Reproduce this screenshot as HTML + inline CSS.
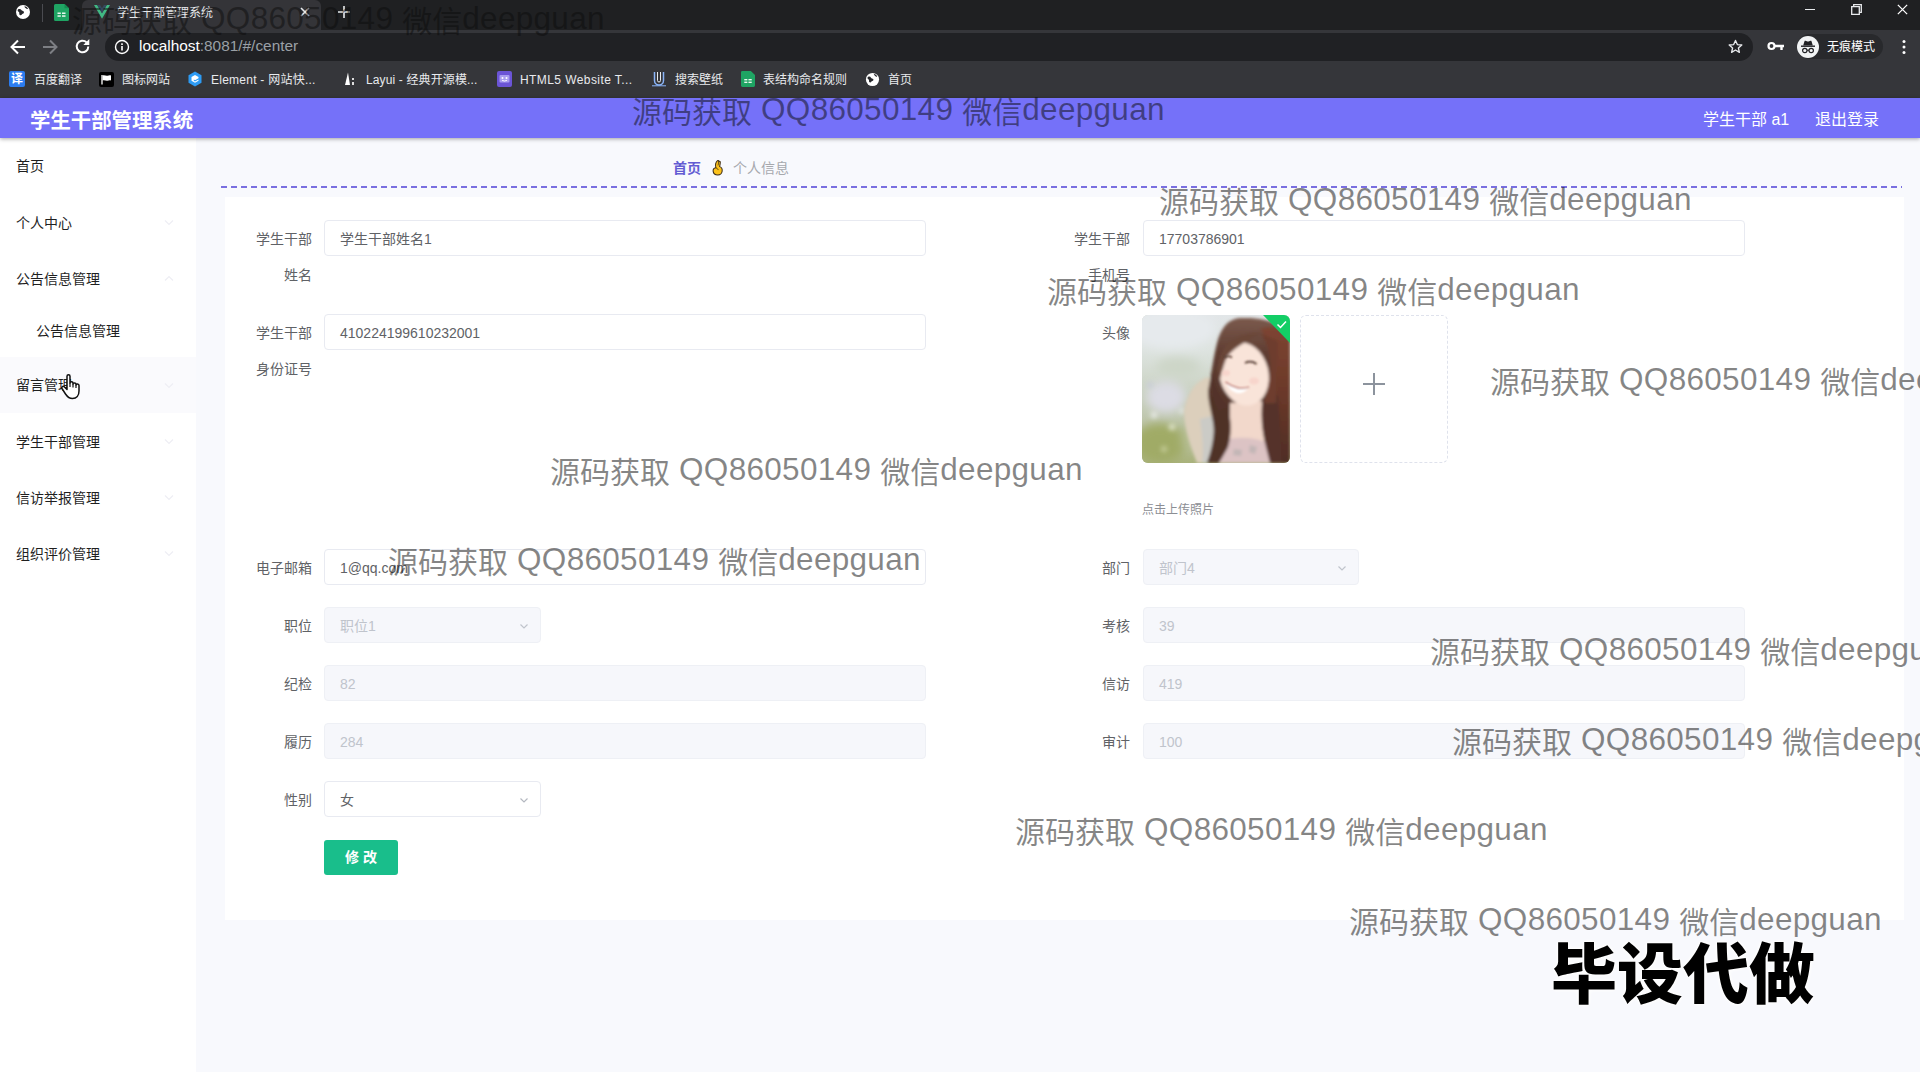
<!DOCTYPE html>
<html lang="zh-CN">
<head>
<meta charset="utf-8">
<title>学生干部管理系统</title>
<style>
*{box-sizing:border-box;margin:0;padding:0}
html,body{width:1920px;height:1072px;overflow:hidden;background:#f8f9fd;font-family:"Liberation Sans","Noto Sans CJK SC",sans-serif;}
.abs{position:absolute}
#chrome{position:absolute;left:0;top:0;width:1920px;height:98px;background:#35363a;color:#e8eaed}
#tabbar{position:absolute;left:0;top:0;width:1920px;height:30px;background:#1f2022}
#tab{position:absolute;left:82px;top:0;width:239px;height:30px;background:#343438;border-radius:6px 6px 0 0}
#tabtitle{position:absolute;left:117px;top:5px;font-size:12px;color:#e8eaed;line-height:16px;white-space:nowrap}
#omni{position:absolute;left:105px;top:33px;width:1648px;height:28px;border-radius:15px;background:#202124}
#url{position:absolute;left:139px;top:37px;font-size:15.4px;line-height:18px;color:#fff;white-space:nowrap}
#url span{color:#9aa0a6}
.bm{position:absolute;top:72px;font-size:12px;line-height:16px;color:#e8eaed;white-space:nowrap}
#hdr{position:absolute;left:0;top:98px;width:1920px;height:40px;background:#7571f9;box-shadow:0 1px 4px rgba(0,0,0,.35)}
#hdr .title{position:absolute;left:30px;top:9.5px;font-size:20.4px;line-height:26px;font-weight:bold;color:#fff;white-space:nowrap}
#hdr .r{position:absolute;top:11.5px;font-size:16px;line-height:20px;color:#fff;white-space:nowrap}
#side{position:absolute;left:0;top:138px;width:196px;height:934px;background:#fff}
.mi{position:absolute;left:16px;font-size:14px;line-height:18px;color:#1f1f1f;white-space:nowrap}
#hover{position:absolute;left:0;top:357px;width:196px;height:56px;background:#fafafd}
.crumb{position:absolute;top:159px;font-size:14px;line-height:18px;white-space:nowrap}
#dash{position:absolute;left:221px;top:186px;width:1681px;height:2px;background:repeating-linear-gradient(90deg,#7a6fe0 0 6px,transparent 6px 10px)}
#card{position:absolute;left:225px;top:197px;width:1679px;height:723px;background:#fff}
.lb{position:absolute;font-size:14px;line-height:18px;color:#606266;text-align:right;width:90px;white-space:nowrap}
.in{position:absolute;height:36px;border:1px solid #e8eaf1;border-radius:4px;background:#fff;font-size:14px;line-height:36px;padding-left:15px;color:#606266;white-space:nowrap}
.in.dis{background:#f6f7fb;border-color:#eef0f5;color:#c0c4cc}
.wm span{font-size:31.5px;letter-spacing:.3px;position:relative;top:-3px}
.wm{position:absolute;font-size:30px;line-height:40px;color:rgba(12,12,12,.5);white-space:nowrap;font-family:"Liberation Sans","Noto Sans CJK SC",sans-serif}

.chev{position:absolute;right:10px;top:12px;width:12px;height:12px}
#btn{position:absolute;left:324px;top:840px;width:74px;height:35px;border-radius:3px;background:#19be8b;color:#fff;font-weight:bold;font-size:14px;line-height:35px;text-align:center}
#photo{position:absolute;left:1142px;top:315px;width:148px;height:148px;border-radius:6px;background:#c9d2c0;overflow:hidden}
#upbox{position:absolute;left:1300px;top:315px;width:148px;height:148px;border-radius:6px;border:1px dashed #dfe2ec;background:#fff}
#upbox .ph{position:absolute;left:62px;top:67px;width:22px;height:1.6px;background:#8c939d}
#upbox .pv{position:absolute;left:72.2px;top:57px;width:1.6px;height:22px;background:#8c939d}
#tip{position:absolute;left:1142px;top:502px;font-size:12px;line-height:16px;color:#8c8e94;white-space:nowrap}

#big{position:absolute;left:1551px;top:925px;font-family:"Noto Sans CJK SC","Liberation Sans",sans-serif;font-weight:900;font-size:66px;line-height:88px;color:#000;white-space:nowrap;letter-spacing:0;-webkit-text-stroke:0;text-shadow:0 0 3px #fff,0 0 3px #fff,0 0 3px #fff,0 0 4px #fff,0 0 5px #fff}
</style>
</head>
<body>
<div id="chrome">
  <div id="tabbar"></div>
  <div id="tab"></div>
  <div id="tabtitle">学生干部管理系统</div>
  <div id="omni"></div>
  <div id="url">localhost<span>:8081/#/center</span></div>

  <!-- tab strip icons -->
  <svg class="abs" style="left:15px;top:4px" width="16" height="16" viewBox="0 0 16 16"><circle cx="8" cy="8" r="7" fill="#fff"/><path d="M3.2 5.2c1.4-.6 2.6-.2 3.2.8.5.9 1.6.7 2.3 1.4.7.8.1 2-.9 2.3-1 .3-1.2 1.5-2.2 1.6-1.1.1-1.5-1.2-1.3-2.2.2-.9-.7-1.3-1.3-1.9-.5-.6-.4-1.600.2-2zM9.500 2.200c1.5.2 2.900 1.200 3.500 2.500-.7.5-1.600.2-2.100-.4-.5-.7-1.500-.9-1.400-2.100z" fill="#26272b"/></svg>
  <div class="abs" style="left:42px;top:4px;width:1px;height:18px;background:#4a4b50"></div>
  <svg class="abs" style="left:54px;top:4px" width="15" height="17" viewBox="0 0 15 17"><path d="M1.500 0h9l4.500 4.200v11.300a1.500 1.500 0 0 1-1.500 1.500h-12a1.500 1.500 0 0 1-1.500-1.500v-14a1.500 1.500 0 0 1 1.500-1.500z" fill="#1fa463"/><path d="M10.500 0l4.500 4.200h-4.500z" fill="#168a50"/><rect x="3.500" y="8.500" width="3.300" height="1.500" fill="#e9f7ef"/><rect x="8" y="8.500" width="3.500" height="1.500" fill="#e9f7ef"/><rect x="3.500" y="11.300" width="3.300" height="1.500" fill="#e9f7ef"/><rect x="8" y="11.300" width="3.500" height="1.500" fill="#e9f7ef"/></svg>
  <svg class="abs" style="left:94px;top:5px" width="16" height="14" viewBox="0 0 16 14"><path d="M0 0h3.200l4.800 8.300 4.800-8.300h3.200l-8 13.800z" fill="#41b883"/><path d="M3.200 0h2.900l1.900 3.300 1.900-3.300h2.900l-4.800 8.300z" fill="#35495e"/></svg>
  <svg class="abs" style="left:299px;top:6px" width="12" height="12" viewBox="0 0 12 12"><path d="M2 2l8 8M10 2l-8 8" stroke="#e8eaed" stroke-width="1.600" fill="none"/></svg>
  <svg class="abs" style="left:337px;top:5px" width="14" height="14" viewBox="0 0 14 14"><path d="M7 1v12M1 7h12" stroke="#e8eaed" stroke-width="1.600" fill="none"/></svg>
  <!-- window controls -->
  <div class="abs" style="left:1805px;top:9px;width:10px;height:1px;background:#e8eaed"></div>
  <svg class="abs" style="left:1851px;top:4px" width="11" height="11" viewBox="0 0 11 11"><path d="M.7 2.700h7.600v7.600h-7.600z" fill="none" stroke="#e8eaed" stroke-width="1.300"/><path d="M2.700 2.700v-2h7.600v7.600h-2" fill="none" stroke="#e8eaed" stroke-width="1.300"/></svg>
  <svg class="abs" style="left:1897px;top:4px" width="11" height="11" viewBox="0 0 13 13"><path d="M1 1l11 11M12 1l-11 11" stroke="#fff" stroke-width="1.500" fill="none"/></svg>
  <!-- toolbar icons -->
  <svg class="abs" style="left:10px;top:39px" width="16" height="16" viewBox="0 0 16 16"><path d="M15 8h-13M8 1.500l-6.500 6.500 6.500 6.500" stroke="#fff" stroke-width="2" fill="none"/></svg>
  <svg class="abs" style="left:42px;top:39px" width="16" height="16" viewBox="0 0 16 16"><path d="M1 8h13M8 1.500l6.500 6.500-6.500 6.500" stroke="#7d7f84" stroke-width="2" fill="none"/></svg>
  <svg class="abs" style="left:74px;top:38px" width="17" height="17" viewBox="0 0 17 17"><path d="M14.300 8.500a5.800 5.800 0 1 1-1.700-4.100" stroke="#fff" stroke-width="2" fill="none"/><path d="M15.300 1v6h-6z" fill="#fff"/></svg>
  <svg class="abs" style="left:114px;top:39px" width="16" height="16" viewBox="0 0 16 16"><circle cx="8" cy="8" r="6.500" stroke="#fff" stroke-width="1.400" fill="none"/><rect x="7.200" y="7" width="1.600" height="4.500" fill="#fff"/><rect x="7.200" y="4.300" width="1.600" height="1.700" fill="#fff"/></svg>
  <svg class="abs" style="left:1727px;top:38px" width="17" height="17" viewBox="0 0 24 24"><path d="M12 3.500l2.600 5.800 6.300.6-4.800 4.200 1.400 6.200-5.500-3.300-5.500 3.300 1.400-6.200-4.800-4.200 6.300-.6z" stroke="#e8eaed" stroke-width="1.900" fill="none" stroke-linejoin="round"/></svg>
  <svg class="abs" style="left:1767px;top:40px" width="18" height="14" viewBox="0 0 18 14"><circle cx="4.500" cy="6" r="3" stroke="#fff" stroke-width="2.200" fill="none"/><path d="M7.500 6h9.500M14.500 6v4" stroke="#fff" stroke-width="2.400" fill="none"/></svg>
  <div class="abs" style="left:1797px;top:34px;width:86px;height:25px;border-radius:12.500px;background:#28292c"></div>
  <svg class="abs" style="left:1797px;top:36px" width="22" height="22" viewBox="0 0 22 22"><circle cx="11" cy="11" r="11" fill="#f1f3f4"/><path d="M6.200 9.500l1.300-4.300c.2-.5.600-.6 1-.4l1.300.5c.8.300 1.600.300 2.400 0l1.300-.5c.4-.2.800-.1 1 .4l1.300 4.300z" fill="#202124"/><rect x="4" y="9.500" width="14" height="1.400" fill="#202124"/><circle cx="7.800" cy="14.500" r="2.200" stroke="#202124" stroke-width="1.200" fill="none"/><circle cx="14.200" cy="14.500" r="2.200" stroke="#202124" stroke-width="1.200" fill="none"/><path d="M10 14.200h2" stroke="#202124" stroke-width="1.100"/></svg>
  <div class="abs" style="left:1827px;top:39px;font-size:12px;line-height:16px;color:#fff;white-space:nowrap">无痕模式</div>
  <svg class="abs" style="left:1902px;top:39px" width="4" height="16" viewBox="0 0 4 16"><circle cx="2" cy="2.500" r="1.500" fill="#fff"/><circle cx="2" cy="8" r="1.500" fill="#fff"/><circle cx="2" cy="13.500" r="1.500" fill="#fff"/></svg>
  <!-- bookmark favicons -->
  <div class="abs" style="left:9px;top:71px;width:16px;height:16px;background:#2b7cf0;border-radius:2px;color:#fff;font-size:12px;line-height:16px;text-align:center;font-weight:bold">译</div>
  <svg class="abs" style="left:99px;top:72px" width="15" height="15" viewBox="0 0 15 15"><rect width="15" height="15" rx="2" fill="#000"/><path d="M3 3v9.500" stroke="#fff" stroke-width="1.300"/><path d="M3.600 3.500c1.800-1 3.200.6 4.800.2 1.300-.3 2.300-.7 3.600-.2v5c-1.300-.5-2.300-.1-3.600.2-1.600.4-3-1.200-4.800-.2z" fill="#fff"/></svg>
  <svg class="abs" style="left:188px;top:71px" width="14" height="16" viewBox="0 0 14 16"><path d="M7 .5l6.500 3.700v7.600l-6.500 3.700-6.500-3.700v-7.600z" fill="#2d9bf4"/><path d="M7 4l3.500 2v1.200l-3.500 2-1.200-.7v1.200l1.200.7 3.500-2v1.300l-3.500 2-3.500-2v-3.700z" fill="#fff"/></svg>
  <svg class="abs" style="left:345px;top:72px" width="11" height="14" viewBox="0 0 11 14"><path d="M3 .5l2 12.500h-5z" fill="#fff"/><rect x="7" y="6" width="2" height="2" fill="#ddd"/><rect x="7" y="10" width="2" height="3" fill="#ddd"/></svg>
  <svg class="abs" style="left:497px;top:71px" width="15" height="16" viewBox="0 0 15 16"><rect width="15" height="16" rx="2" fill="#6b54d6"/><rect x="2.500" y="4" width="10" height="7.500" rx="1" fill="#a99df0"/><circle cx="5.500" cy="7" r="1" fill="#fff"/><circle cx="9.500" cy="7" r="1" fill="#fff"/><path d="M5 9.300q2.500 1.500 5 0" stroke="#fff" fill="none" stroke-width=".9"/></svg>
  <svg class="abs" style="left:651px;top:71px" width="16" height="16" viewBox="0 0 16 16"><path d="M3.500 1v8.500a4.500 4.500 0 0 0 9 0v-8.500" stroke="#8ab4f8" stroke-width="1.500" fill="none"/><path d="M6.500 1v8.500a1.500 1.500 0 0 0 3 0v-8.500" stroke="#e8eaed" stroke-width="1" fill="none"/><path d="M1 14.800h14" stroke="#8ab4f8" stroke-width="1"/></svg>
  <svg class="abs" style="left:741px;top:71px" width="14" height="16" viewBox="0 0 15 17"><path d="M1.500 0h9l4.500 4.200v11.300a1.500 1.500 0 0 1-1.500 1.500h-12a1.500 1.500 0 0 1-1.500-1.500v-14a1.500 1.500 0 0 1 1.500-1.500z" fill="#1fa463"/><rect x="3.500" y="8.500" width="3.300" height="1.500" fill="#e9f7ef"/><rect x="8" y="8.500" width="3.500" height="1.500" fill="#e9f7ef"/><rect x="3.500" y="11.300" width="3.300" height="1.500" fill="#e9f7ef"/><rect x="8" y="11.300" width="3.500" height="1.500" fill="#e9f7ef"/></svg>
  <svg class="abs" style="left:865px;top:72px" width="15" height="15" viewBox="0 0 16 16"><circle cx="8" cy="8" r="7" fill="#fff"/><path d="M3.200 5.200c1.400-.6 2.600-.2 3.200.8.5.9 1.600.7 2.300 1.400.7.8.1 2-.9 2.300-1 .3-1.200 1.500-2.200 1.600-1.100.1-1.500-1.200-1.300-2.200.2-.9-.7-1.300-1.300-1.900-.5-.6-.4-1.600.2-2zM9.500 2.200c1.500.2 2.900 1.200 3.500 2.500-.7.5-1.600.2-2.100-.4-.5-.7-1.500-.9-1.400-2.100z" fill="#26272b"/></svg>
  <div class="bm" style="left:34px">百度翻译</div>
  <div class="bm" style="left:122px">图标网站</div>
  <div class="bm" style="left:211px;letter-spacing:.25px">Element - 网站快...</div>
  <div class="bm" style="left:366px;letter-spacing:.13px">Layui - 经典开源模...</div>
  <div class="bm" style="left:520px;letter-spacing:.42px">HTML5 Website T...</div>
  <div class="bm" style="left:675px">搜索壁纸</div>
  <div class="bm" style="left:763px">表结构命名规则</div>
  <div class="bm" style="left:888px">首页</div>
</div>
<div id="side">
</div>
<div id="hover"></div>
<svg class="abs" style="left:164px;top:219px" width="10" height="7" viewBox="0 0 10 7"><path d="M1 1.500 L5 5.500 L9 1.500" fill="none" stroke="#eeeef4" stroke-width="1.200"/></svg>
<svg class="abs" style="left:164px;top:275px" width="10" height="7" viewBox="0 0 10 7"><path d="M1 5.500 L5 1.500 L9 5.500" fill="none" stroke="#eeeef4" stroke-width="1.200"/></svg>
<svg class="abs" style="left:164px;top:382px" width="10" height="7" viewBox="0 0 10 7"><path d="M1 1.500 L5 5.500 L9 1.500" fill="none" stroke="#eeeef4" stroke-width="1.200"/></svg>
<svg class="abs" style="left:164px;top:438px" width="10" height="7" viewBox="0 0 10 7"><path d="M1 1.500 L5 5.500 L9 1.500" fill="none" stroke="#eeeef4" stroke-width="1.200"/></svg>
<svg class="abs" style="left:164px;top:494px" width="10" height="7" viewBox="0 0 10 7"><path d="M1 1.500 L5 5.500 L9 1.500" fill="none" stroke="#eeeef4" stroke-width="1.200"/></svg>
<svg class="abs" style="left:164px;top:550px" width="10" height="7" viewBox="0 0 10 7"><path d="M1 1.500 L5 5.500 L9 1.500" fill="none" stroke="#eeeef4" stroke-width="1.200"/></svg>
<div class="mi" style="top:157px">首页</div>
<div class="mi" style="top:214px">个人中心</div>
<div class="mi" style="top:270px">公告信息管理</div>
<div class="mi" style="top:322px;left:36px">公告信息管理</div>
<div class="mi" style="top:376px">留言管理</div>
<div class="mi" style="top:433px">学生干部管理</div>
<div class="mi" style="top:489px">信访举报管理</div>
<div class="mi" style="top:545px">组织评价管理</div>

<svg class="abs" style="left:60px;top:373px" width="21" height="27" viewBox="0 0 21 27"><path d="M7 13.500 V3.200 C7 1.200 10 1.200 10 3.200 V10 C10 8.300 13 8.300 13 10.200 V11 C13 9.500 16 9.500 16 11.200 V12 C16 10.700 19 10.700 19 12.500 V18 C19 22.500 16.500 25.500 12.500 25.500 C9 25.500 7.500 24 5.500 21 L2 15.500 C1 13.800 3.200 12.500 4.500 14 L7 16.500 Z" fill="#fff" stroke="#111" stroke-width="1.500" stroke-linejoin="round"/><path d="M10 10 V14 M13 11 V14.500 M16 12 V15" stroke="#111" stroke-width="1.200" fill="none"/></svg>
<div class="crumb" style="left:673px;color:#635cd3;font-weight:bold">首页</div>
<div class="crumb" style="left:733px;color:#a6a8ad">个人信息</div>
<svg class="abs" style="left:711px;top:159px" width="13" height="17.500" viewBox="0 0 14 18"><path d="M5.200 9 C4.500 6 5.500 2.500 7 1.300 C8 .8 8.600 1.600 8.200 2.600 C8.800 1.600 10 1.600 10 2.900 C10 5 9.600 6.500 9.300 7.800 C11.500 8.500 12.300 10.500 12 12.800 C11.600 15.500 9.800 16.800 7.300 16.800 C4.600 16.800 2.600 15.200 2.300 12.600 C2.100 10.800 3.200 9.300 5.200 9 Z" fill="#fcc21b" stroke="#3b2a14" stroke-width="1.100" stroke-linejoin="round"/><path d="M5.200 9.200 C6.500 9.500 7.500 10.200 7.700 11.500" stroke="#3b2a14" stroke-width=".9" fill="none"/><path d="M7.600 6.500 L8.300 2.800" stroke="#3b2a14" stroke-width=".8" fill="none"/></svg>
<div id="dash"></div>
<div id="card"></div>

<!-- left column -->
<div class="lb" style="left:222px;top:230px">学生干部</div>
<div class="lb" style="left:222px;top:266px">姓名</div>
<div class="in" style="left:324px;top:220px;width:602px">学生干部姓名1</div>
<div class="lb" style="left:222px;top:324px">学生干部</div>
<div class="lb" style="left:222px;top:360px">身份证号</div>
<div class="in" style="left:324px;top:314px;width:602px">410224199610232001</div>
<div class="lb" style="left:222px;top:559px">电子邮箱</div>
<div class="in" style="left:324px;top:549px;width:602px">1@qq.com</div>
<div class="lb" style="left:222px;top:617px">职位</div>
<div class="in dis" style="left:324px;top:607px;width:217px">职位1<svg class="chev" viewBox="0 0 12 12"><path d="M2.5 4.5 L6 8 L9.5 4.5" fill="none" stroke="#c0c4cc" stroke-width="1.2"/></svg></div>
<div class="lb" style="left:222px;top:675px">纪检</div>
<div class="in dis" style="left:324px;top:665px;width:602px">82</div>
<div class="lb" style="left:222px;top:733px">履历</div>
<div class="in dis" style="left:324px;top:723px;width:602px">284</div>
<div class="lb" style="left:222px;top:791px">性别</div>
<div class="in" style="left:324px;top:781px;width:217px">女<svg class="chev" viewBox="0 0 12 12"><path d="M2.5 4.5 L6 8 L9.5 4.5" fill="none" stroke="#b4b8c0" stroke-width="1.2"/></svg></div>
<div id="btn">修 改</div>

<!-- right column -->
<div class="lb" style="left:1040px;top:230px">学生干部</div>
<div class="lb" style="left:1040px;top:266px">手机号</div>
<div class="in" style="left:1143px;top:220px;width:602px">17703786901</div>
<div class="lb" style="left:1040px;top:324px">头像</div>
<div id="photo"><svg width="148" height="148" viewBox="0 0 148 148">
<defs>
<filter id="b6" x="-30%" y="-30%" width="160%" height="160%"><feGaussianBlur stdDeviation="5"/></filter>
<filter id="b3" x="-30%" y="-30%" width="160%" height="160%"><feGaussianBlur stdDeviation="1.800"/></filter>
<filter id="b15" x="-30%" y="-30%" width="160%" height="160%"><feGaussianBlur stdDeviation=".8"/></filter>
<filter id="b2" x="-30%" y="-30%" width="160%" height="160%"><feGaussianBlur stdDeviation="2.500"/></filter>
<linearGradient id="bgp" x1="0" y1="0" x2="0" y2="1"><stop offset="0" stop-color="#e2e6e8"/><stop offset=".25" stop-color="#dde3df"/><stop offset=".5" stop-color="#cbd3c4"/><stop offset=".75" stop-color="#bcc4a8"/><stop offset="1" stop-color="#a9b27c"/></linearGradient>
<linearGradient id="hairg" x1="0" y1="0" x2="0" y2="1"><stop offset="0" stop-color="#7b5a4d"/><stop offset=".25" stop-color="#5e3c31"/><stop offset="1" stop-color="#4b2d25"/></linearGradient>
<linearGradient id="hairr" x1="0" y1="0" x2="0" y2="1"><stop offset="0" stop-color="#7d4431"/><stop offset=".5" stop-color="#6a3829"/><stop offset="1" stop-color="#4e2c24"/></linearGradient>
</defs>
<rect width="148" height="148" fill="url(#bgp)"/>
<g filter="url(#b6)">
<ellipse cx="30" cy="14" rx="44" ry="20" fill="#e6eaed"/>
<ellipse cx="24" cy="82" rx="20" ry="16" fill="#dcdce4"/>
<ellipse cx="18" cy="128" rx="26" ry="20" fill="#a0ab66"/>
<ellipse cx="36" cy="52" rx="22" ry="10" fill="#cdd6c8"/>
<ellipse cx="48" cy="122" rx="8" ry="14" fill="#b7bf95"/>
</g>
<g filter="url(#b2)">
<circle cx="12" cy="100" r="3" fill="#eef0ee"/><circle cx="30" cy="112" r="3" fill="#e8ecd8"/><circle cx="22" cy="134" r="2.500" fill="#d5dbb0"/><circle cx="40" cy="96" r="3" fill="#e4e6e6"/><circle cx="8" cy="70" r="3" fill="#c9cdd9"/>
</g>
<g filter="url(#b3)">
<path d="M66 62 C54 66 46 76 42 96 C42 116 50 134 55 148 L80 148 L76 70 Z" fill="#dccfbc"/>
<path d="M58 104 C60 120 62 136 60 148 L76 148 L74 100 Z" fill="#cbcbc6"/>
<path d="M100 3 C88 3 80 10 75 28 C71 44 70 56 66 76 C66 90 72 104 72 118 C72 130 68 140 65 148 L148 148 L148 20 C140 8 122 2 100 3 Z" fill="url(#hairg)"/>
<path d="M118 14 C132 30 138 70 132 110 C130 126 136 140 138 148 L148 148 L148 20 C140 12 128 10 118 14 Z" fill="url(#hairr)"/>
<path d="M88 88 C88 104 88 122 80 148 L128 148 C122 130 119 108 120 86 Z" fill="#f2d8cb"/>
<path d="M80 126 C94 121 112 122 126 128 L130 148 L76 148 Z" fill="#dcc3c4"/>
<path d="M92 134 l8 1 l-1 6 l-8 -1 Z M108 130 l7 2 l-2 7 l-6 -2 Z" fill="#c2b6b6"/>
<path d="M84 92 C90 100 90 120 86 132 C82 140 78 146 77 148 L65 148 C70 134 72 122 72 110 C72 100 68 92 68 80 Z" fill="#4f3028"/>
<path d="M121 84 C118 100 120 116 124 132 L128 148 L140 148 L136 80 Z" fill="#55302a"/>
<ellipse cx="102" cy="59" rx="24.500" ry="32" transform="rotate(-14 102 59)" fill="#f9e4d9"/>
<path d="M76 56 C76 36 88 16 120 18 C110 24 94 30 85 42 C82 48 80 58 78 64 Z" fill="#6a4639"/>
<path d="M118 18 C126 28 130 44 128 60 C127 70 124 80 122 88 L134 88 L136 26 Z" fill="#6e3d2d"/>
<path d="M70 56 C72 70 78 82 86 92 L76 96 C70 84 68 70 70 56 Z" fill="#523229"/>
</g>
<g filter="url(#b15)">
<path d="M84 67.500 C91 73.500 100 75.500 106.500 72.500 C101 82 88 79 84 67.500 Z" fill="#fff"/>
<path d="M83.500 67 C91 73 100 75 107 72" stroke="#b45f57" stroke-width="1.300" fill="none"/>
<path d="M82 42.500 q4 -2.500 8 0" stroke="#4a3028" stroke-width="1.700" fill="none"/>
<path d="M103 48 q6 -3 11.500 1" stroke="#4a3028" stroke-width="1.700" fill="none"/>
<ellipse cx="84" cy="58" rx="4" ry="3" fill="#f6cfc6" opacity=".7"/><ellipse cx="112" cy="66" rx="5" ry="3.500" fill="#f6cfc6" opacity=".7"/>
</g>
<path d="M121 0 L148 0 L148 28 Z" fill="#13ce66"/>
<path d="M135.500 9.500 l3 3 l5.500 -6" stroke="#fff" stroke-width="1.500" fill="none"/>
</svg></div>
<div id="upbox"><i class="ph"></i><i class="pv"></i></div>
<div id="tip">点击上传照片</div>
<div class="lb" style="left:1040px;top:559px">部门</div>
<div class="in dis" style="left:1143px;top:549px;width:216px">部门4<svg class="chev" viewBox="0 0 12 12"><path d="M2.5 4.5 L6 8 L9.5 4.5" fill="none" stroke="#c0c4cc" stroke-width="1.2"/></svg></div>
<div class="lb" style="left:1040px;top:617px">考核</div>
<div class="in dis" style="left:1143px;top:607px;width:602px">39</div>
<div class="lb" style="left:1040px;top:675px">信访</div>
<div class="in dis" style="left:1143px;top:665px;width:602px">419</div>
<div class="lb" style="left:1040px;top:733px">审计</div>
<div class="in dis" style="left:1143px;top:723px;width:602px">100</div>

<div id="hdr">
  <div class="title">学生干部管理系统</div>
  <div class="r" style="left:1703px">学生干部 a1</div>
  <div class="r" style="left:1815px">退出登录</div>
</div>

<!-- watermarks -->
<div class="wm" style="left:72px;top:1px">源码获取<span> QQ86050149 </span>微信<span>deepguan</span></div>
<div class="wm" style="left:632px;top:92px">源码获取<span> QQ86050149 </span>微信<span>deepguan</span></div>
<div class="wm" style="left:1159px;top:182px">源码获取<span> QQ86050149 </span>微信<span>deepguan</span></div>
<div class="wm" style="left:1047px;top:272px">源码获取<span> QQ86050149 </span>微信<span>deepguan</span></div>
<div class="wm" style="left:1490px;top:362px">源码获取<span> QQ86050149 </span>微信<span>deepguan</span></div>
<div class="wm" style="left:550px;top:452px">源码获取<span> QQ86050149 </span>微信<span>deepguan</span></div>
<div class="wm" style="left:388px;top:542px">源码获取<span> QQ86050149 </span>微信<span>deepguan</span></div>
<div class="wm" style="left:1430px;top:632px">源码获取<span> QQ86050149 </span>微信<span>deepguan</span></div>
<div class="wm" style="left:1452px;top:722px">源码获取<span> QQ86050149 </span>微信<span>deepguan</span></div>
<div class="wm" style="left:1015px;top:812px">源码获取<span> QQ86050149 </span>微信<span>deepguan</span></div>
<div class="wm" style="left:1349px;top:902px">源码获取<span> QQ86050149 </span>微信<span>deepguan</span></div>
<div id="big">毕设代做</div>
</body>
</html>
